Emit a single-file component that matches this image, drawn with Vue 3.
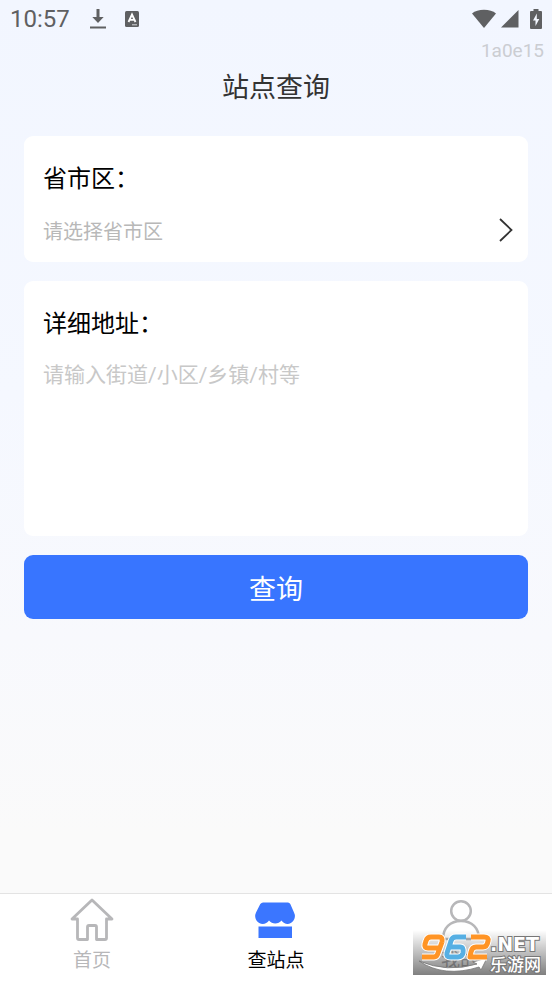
<script setup>
import { ref } from 'vue'

const address = ref('')
</script>

<template>
  <div class="page">
    <div class="status">
      <span class="time">10:57</span>
      <svg class="download" viewBox="0 0 18 22" width="18" height="22" aria-hidden="true">
        <path d="M7.500 1h3v8h4.200L9 15 3.300 9h4.200zM1 18.500h16v2H1z" fill="#5f6062" />
      </svg>
      <svg class="input-method" viewBox="0 0 16 18" width="16" height="18" aria-hidden="true">
        <rect x="1" y="1" width="14" height="16" rx="1.500" fill="#5f6062" />
        <path d="M4.500 12 8 4.500l3.500 7.500M5.800 9.800h4.400" fill="none" stroke="#fff" stroke-width="1.800" />
        <path d="M8 14.800h5" stroke="#d5d7db" stroke-width="1" />
      </svg>
      <span class="signals">
        <svg viewBox="0 0 24 20" width="24" height="20" aria-hidden="true">
          <path d="M0 4.500C3 2 7 .8 12 .8s9 1.200 12 3.700L12 19z" fill="#5f6062" />
        </svg>
        <svg viewBox="0 0 18 18" width="18" height="18" aria-hidden="true">
          <path d="M0 17.500 17.500 0v17.500z" fill="#5f6062" />
        </svg>
        <svg viewBox="0 0 12 20" width="12" height="20" aria-hidden="true">
          <path d="M3.500 0h5v2H11q1 0 1 1v16q0 1-1 1H1q-1 0-1-1V3q0-1 1-1h2.500z" fill="#5f6062" />
          <path d="M6.800 4.500 3 11.500h2.500V17L9.300 10H6.800z" fill="#f3f7ff" />
        </svg>
      </span>
    </div>
    <div class="version">1a0e15</div>
    <h1 class="title">站点查询</h1>

    <form class="form" @submit.prevent>
      <section class="card">
        <label class="label" for="region">省市区：</label>
        <button id="region" class="picker" type="button">
          <span>请选择省市区</span>
          <svg viewBox="0 0 14 24" width="14" height="24" aria-hidden="true">
            <path d="m1 1 11.500 11L1 23" fill="none" stroke="#333" stroke-width="1.800" />
          </svg>
        </button>
      </section>
      <section class="card">
        <label class="label" for="address">详细地址：</label>
        <textarea id="address" v-model="address" class="address" placeholder="请输入街道/小区/乡镇/村等"></textarea>
      </section>
      <button class="submit" type="submit">查询</button>
    </form>

    <nav class="tabs">
      <a class="tab" href="#home">
        <svg viewBox="0 0 44 44" width="44" height="44" aria-hidden="true">
          <path d="M2 22 22 3l20 19h-5.500v19q0 1.500-1.500 1.500H26.500V30q0-1.500-1.500-1.500h-6q-1.500 0-1.500 1.500v12.500H9q-1.500 0-1.500-1.500V22z" fill="none" stroke="#b7b7b9" stroke-width="2.800" stroke-linejoin="round" />
        </svg>
        <span>首页</span>
      </a>
      <a class="tab active" href="#sites">
        <svg viewBox="0 0 44 44" width="44" height="44" aria-hidden="true">
          <path d="M9 5.500h25q1.500 0 2.300 1.500L40 15.500q2 4-.5 8c-3 4.500-9 4.500-12 0-3 4-9.500 4-12.500 0-3 4.500-9.500 4.500-12.500 0Q.2 19.500 2 15.500L6.300 7Q7.500 5.500 9 5.500z" fill="#3b76ff" />
          <path d="M4.500 29.500h33.500V41H4.500z" fill="#3b76ff" />
        </svg>
        <span>查站点</span>
      </a>
      <a class="tab" href="#mine">
        <svg viewBox="0 0 44 44" width="44" height="44" aria-hidden="true">
          <circle cx="23" cy="14" r="9.800" fill="none" stroke="#b7b7b9" stroke-width="2.500" />
          <path d="M5 42c0-11 7-18 18-18s18 7 18 18z" fill="none" stroke="#b7b7b9" stroke-width="2.500" />
        </svg>
        <span>我的</span>
      </a>
      <div class="watermark">
        <svg viewBox="0 0 133 45" width="133" height="45" aria-hidden="true">
          <defs>
            <linearGradient id="shade" x1="0" y1="0" x2="0" y2="1">
              <stop offset="0" stop-color="#000" stop-opacity="0" />
              <stop offset="1" stop-color="#000" stop-opacity=".5" />
            </linearGradient>
          </defs>
          <path d="M0 0h133v45H0z" fill="url(#shade)" />
          <path d="M6 31q28 12 58 3l-4-2 14-4-6 12-2-3Q31 48 6 31z" fill="#fff" stroke="#777" stroke-width=".8" />
          <g fill="none" stroke-linejoin="round">
            <g stroke="#fff" stroke-width="7">
              <path d="M29 12q1-5-3-5h-8q-4 0-5 4l-1 3q-1 4 3 4h11m3-6-4 11q-1 4-4 4H9" />
              <path d="M53 7H43q-4 0-5 4l-4 12q-1 4 3 4h8q4 0 5-4 1-6-3-6H37" />
              <path d="M58 7h13q5 0 4 4-1 6-5 6h-7q-4 0-5 5l-1 5h17" />
            </g>
            <path d="M29 12q1-5-3-5h-8q-4 0-5 4l-1 3q-1 4 3 4h11m3-6-4 11q-1 4-4 4H9" stroke="#ff9425" stroke-width="5" />
            <path d="M53 7H43q-4 0-5 4l-4 12q-1 4 3 4h8q4 0 5-4 1-6-3-6H37" stroke="#56afe3" stroke-width="5" />
            <path d="M58 7h13q5 0 4 4-1 6-5 6h-7q-4 0-5 5l-1 5h17" stroke="#ff9425" stroke-width="5" />
          </g>
          <text x="77" y="21" class="net">.NET</text>
          <text x="77" y="41" class="brand">乐游网</text>
        </svg>
      </div>
    </nav>
  </div>
</template>

<style>
body {
  margin: 0;
}
</style>

<style scoped>
.page {
  display: flex;
  flex-direction: column;
  min-height: 100vh;
  background: linear-gradient(#f2f6ff, #f5f8ff 40%, #f8f9fd 65%, #fafafa 85%);
  font-family: Roboto, "Noto Sans CJK SC", sans-serif;
  color: #000;
}
button,
textarea {
  font-family: inherit;
  border: 0;
  padding: 0;
  background: none;
}
.status {
  display: flex;
  align-items: center;
  height: 38px;
  padding: 0 10px;
  color: #5f6062;
}
.time {
  font-size: 24px;
}
.download {
  margin-left: 19px;
}
.input-method {
  margin-left: 17px;
}
.signals {
  display: flex;
  align-items: center;
  gap: 5px;
  margin-left: auto;
}
.signals svg:last-child {
  margin-left: 6px;
}
.version {
  padding: 0 8px;
  text-align: right;
  font-size: 19px;
  line-height: 26px;
  color: #cbcdd2;
}
.title {
  margin: 6px 0 0;
  text-align: center;
  font-size: 27px;
  line-height: 36px;
  font-weight: 400;
  color: #333;
}
.form {
  display: flex;
  flex-direction: column;
  gap: 19px;
  padding: 30px 24px;
}
.card {
  display: flex;
  flex-direction: column;
  padding: 25px 15px 14px 19px;
  border-radius: 9px;
  background: #fff;
}
.label {
  font-size: 24px;
  line-height: 36px;
}
.picker {
  display: flex;
  align-items: center;
  justify-content: space-between;
  height: 36px;
  margin-top: 15px;
  font-size: 20px;
  color: #b8b8b8;
}
.address {
  height: 165px;
  margin-top: 15px;
  outline: 0;
  resize: none;
  font-size: 21px;
  line-height: 36px;
  color: #333;
}
.address::placeholder {
  color: #c8c8c8;
}
.submit {
  height: 64px;
  border-radius: 9px;
  background: #3875ff;
  font-size: 27px;
  color: #fff;
}
.tabs {
  position: relative;
  display: grid;
  grid-template-columns: repeat(3, 1fr);
  height: 87px;
  margin-top: auto;
  border-top: 1px solid #e3e3e3;
  background: #fff;
}
.tab {
  display: flex;
  flex-direction: column;
  align-items: center;
  padding-top: 3px;
  font-size: 19px;
  line-height: 40px;
  color: #b7b7b9;
  text-decoration: none;
}
.active {
  color: #000;
}
.watermark {
  position: absolute;
  right: 6px;
  bottom: 6px;
  height: 45px;
}
.net {
  font: 700 19px "DejaVu Sans", sans-serif;
  fill: #fff;
  stroke: #777;
  stroke-width: 2px;
  paint-order: stroke;
}
.brand {
  font: 500 17px "Noto Sans CJK SC", sans-serif;
  fill: #fff;
  stroke: #777;
  stroke-width: 2px;
  paint-order: stroke;
}
</style>
